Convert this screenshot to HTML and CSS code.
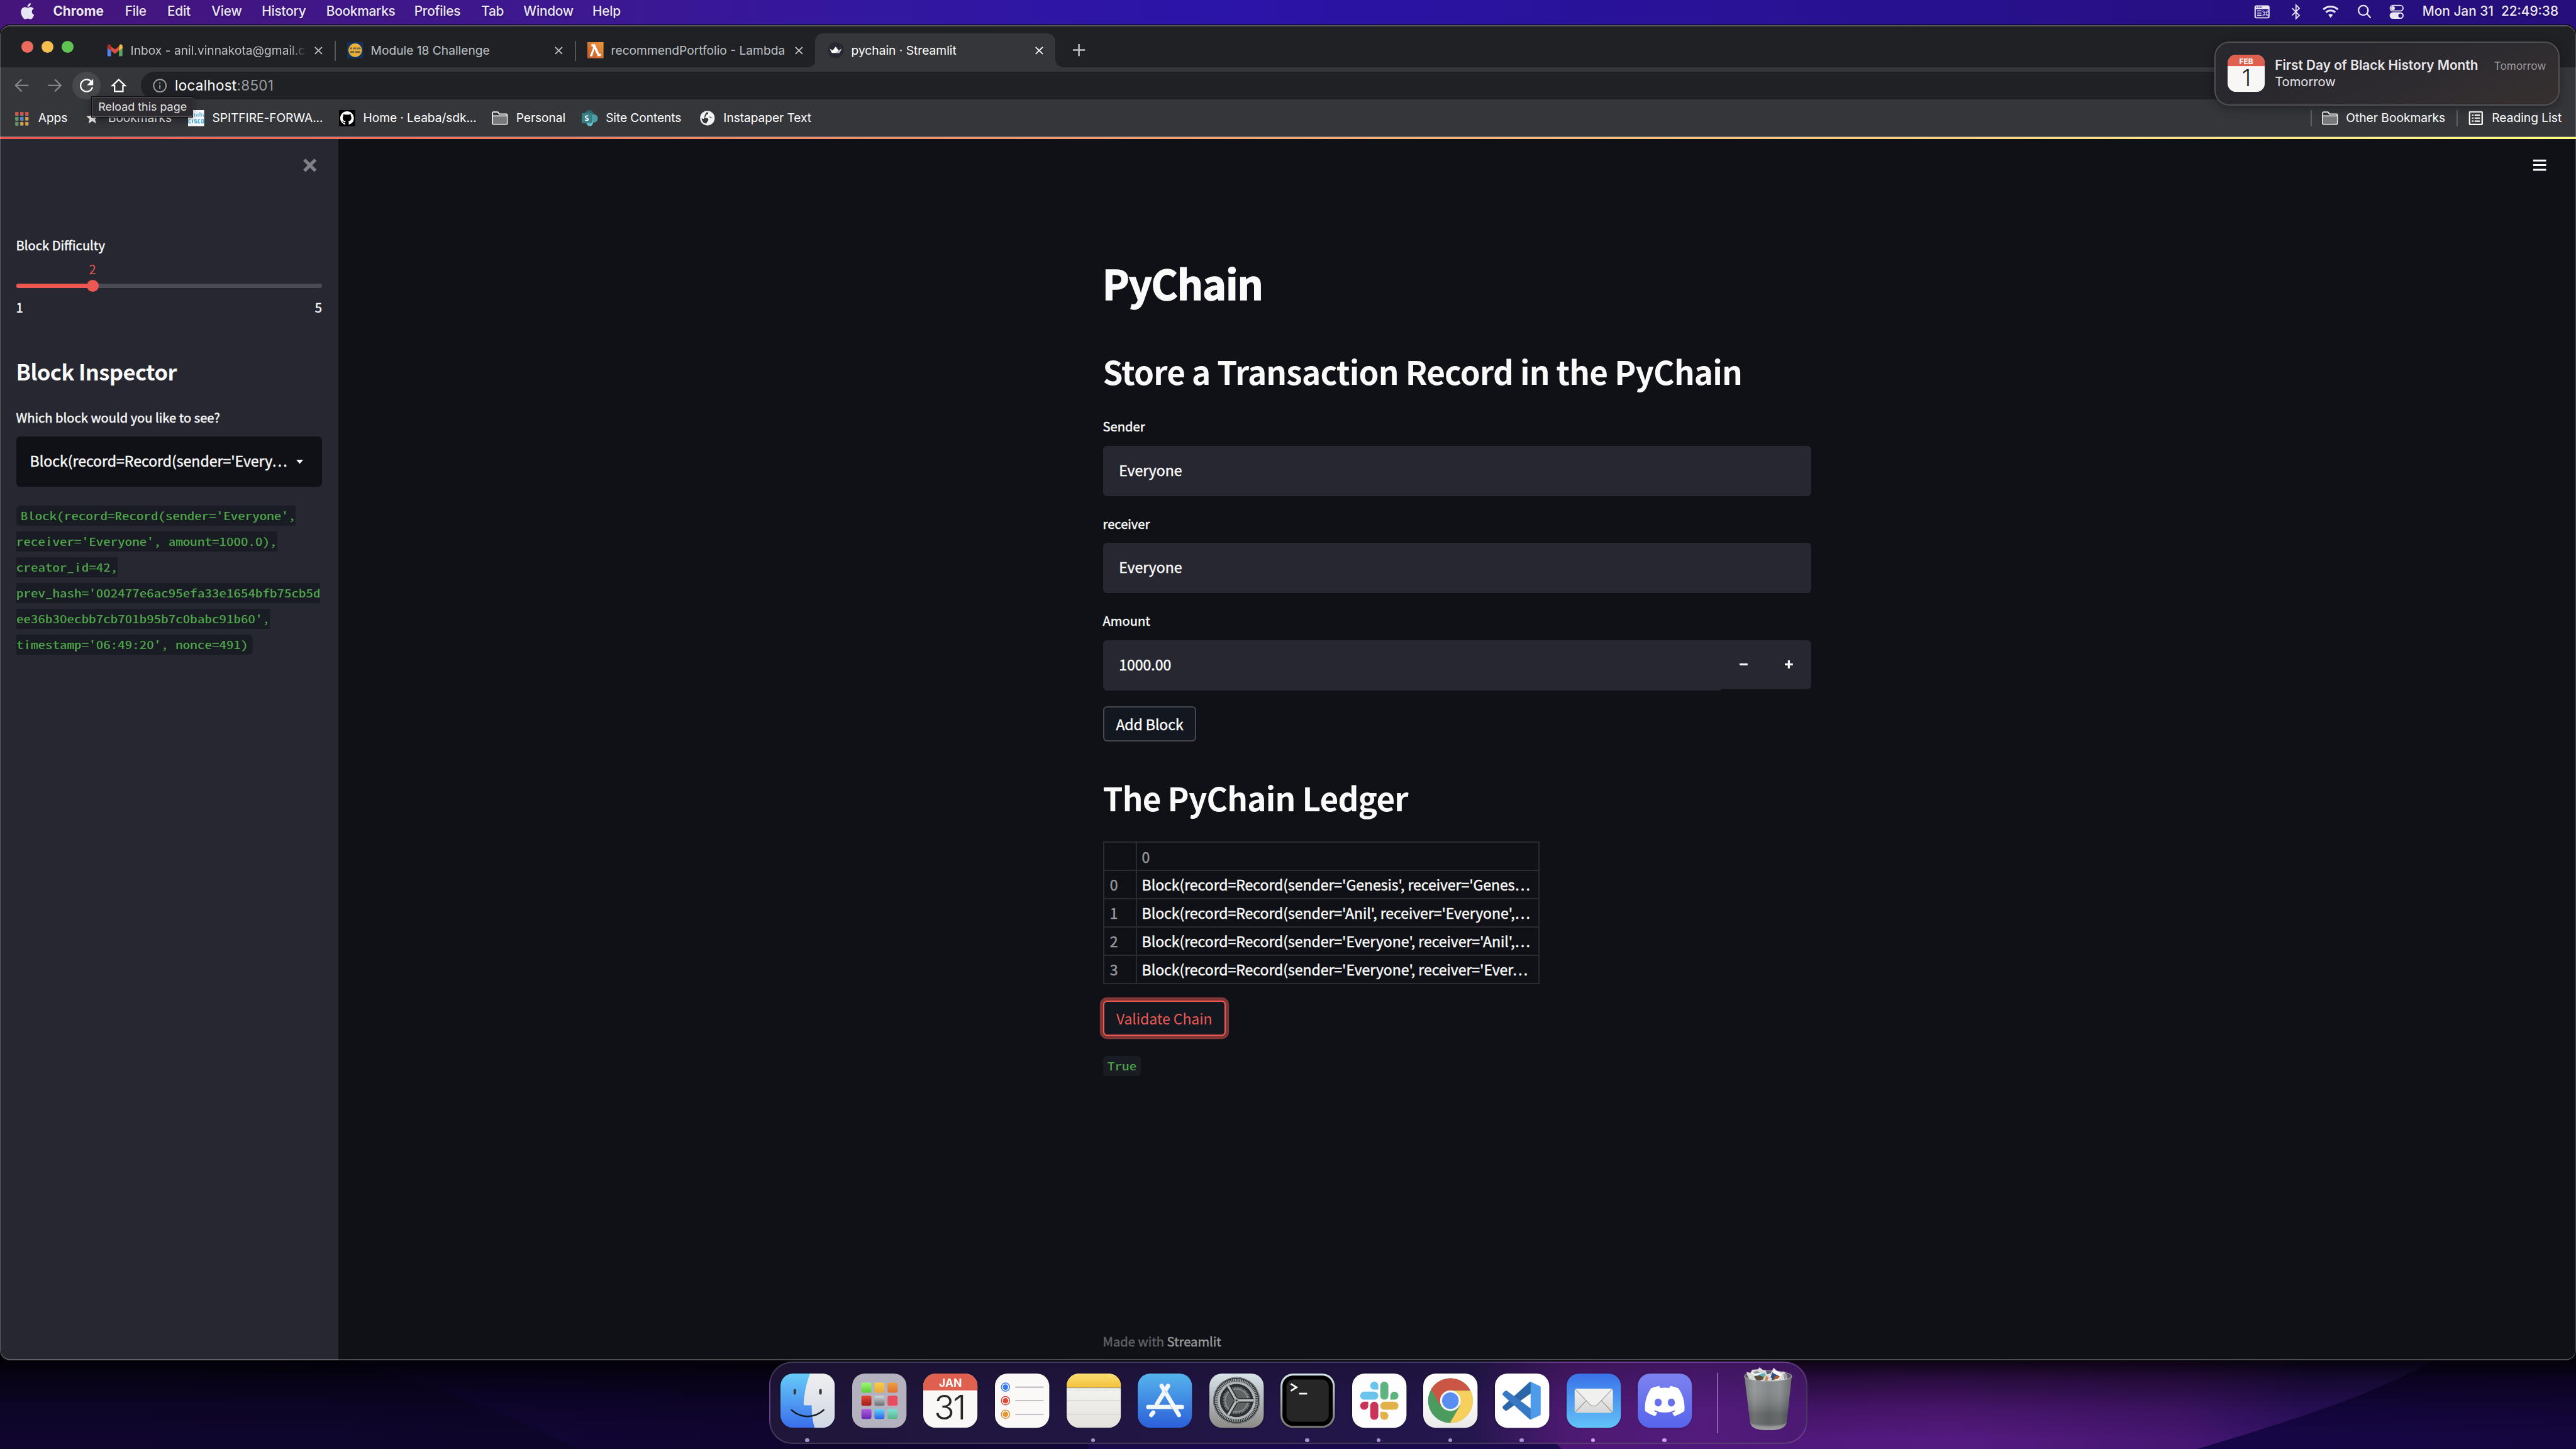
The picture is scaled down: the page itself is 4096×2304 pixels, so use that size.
FILE: index.html
```html
<!DOCTYPE html>
<html lang="en">
<head>
<meta charset="utf-8">
<title>pychain · Streamlit</title>
<link rel="stylesheet" href="styles.css">
</head>
<body>
<div class="desktop">
  <svg class="wallpaper" viewBox="0 0 5120 200" preserveAspectRatio="none">
    <defs>
      <linearGradient id="w1" x1="0" x2="1" y1="0" y2="0"><stop offset="0" stop-color="#10062f"/><stop offset=".6" stop-color="#0b0424"/><stop offset="1" stop-color="#0c0526"/></linearGradient>
      <linearGradient id="w2" x1="0" x2="1" y1="0" y2="0"><stop offset="0" stop-color="#12063a"/><stop offset=".4" stop-color="#10052f"/><stop offset="1" stop-color="#170847"/></linearGradient>
      <linearGradient id="w3" x1="0" x2="1" y1="0" y2="0"><stop offset="0" stop-color="#4a1474"/><stop offset=".48" stop-color="#551a80"/><stop offset=".72" stop-color="#461672"/><stop offset=".85" stop-color="#2c1163"/><stop offset="1" stop-color="#2a1466"/></linearGradient>
      <linearGradient id="w4" x1="0" x2="1" y1="0" y2="0"><stop offset="0" stop-color="#170648"/><stop offset="1" stop-color="#16063f"/></linearGradient>
      <linearGradient id="ws" x1="0" x2="0" y1="0" y2="1"><stop offset=".1" stop-color="#000" stop-opacity=".88"/><stop offset=".3" stop-color="#000" stop-opacity=".52"/><stop offset=".6" stop-color="#000" stop-opacity=".18"/><stop offset=".9" stop-color="#000" stop-opacity="0"/></linearGradient>
    </defs>
    <rect width="5120" height="200" fill="url(#w1)"/>
    <path d="M630 0C800 60 1000 120 1150 200H3200V0z" fill="url(#w2)"/>
    <path d="M2155 180H3200V200H2165z" fill="#1a0a4c"/>
    <path d="M2950 0L3086 182L3104 200H4368C4600 130 4750 80 4880 0z" fill="url(#w3)"/>
    <path d="M4368 200C4600 130 4750 80 4880 0H5120V200z" fill="url(#w4)"/>
    <rect width="5120" height="200" fill="url(#ws)"/>
  </svg>

  <header class="menubar">
    <nav class="menubar-menus">
      <svg class="apple" viewBox="0 0 24 24"><path d="M12.152 6.896c-.948 0-2.415-1.078-3.96-1.04-2.04.027-3.91 1.183-4.961 3.014-2.117 3.675-.546 9.103 1.519 12.09 1.013 1.454 2.208 3.09 3.792 3.039 1.52-.065 2.09-.987 3.935-.987 1.831 0 2.35.987 3.96.948 1.637-.026 2.676-1.48 3.676-2.948 1.156-1.688 1.636-3.325 1.662-3.415-.039-.013-3.182-1.221-3.22-4.857-.026-3.04 2.48-4.494 2.597-4.559-1.429-2.09-3.623-2.324-4.39-2.376-2-.156-3.675 1.09-4.61 1.09zM15.53 3.83c.843-1.012 1.4-2.427 1.245-3.83-1.207.052-2.662.805-3.532 1.818-.78.896-1.454 2.338-1.273 3.714 1.338.104 2.715-.688 3.559-1.701"/></svg>
      <b>Chrome</b><span>File</span><span>Edit</span><span>View</span><span>History</span><span>Bookmarks</span><span>Profiles</span><span>Tab</span><span>Window</span><span>Help</span>
    </nav>
    <div class="menubar-status">
      <svg viewBox="0 0 32 32"><path fill-rule="evenodd" d="M5 3h22a4 4 0 0 1 4 4v18a4 4 0 0 1-4 4H5a4 4 0 0 1-4-4V7a4 4 0 0 1 4-4zM3.500 10.500V25a1.800 1.800 0 0 0 1.800 1.800h21.400A1.800 1.800 0 0 0 28.500 25V10.500z"/><path d="M4.500 6.800h2.200M8.500 6.800h2.200M12.500 6.800h2.200" stroke="#280f85" stroke-width="2.200"/><path d="M6 14h9M6 18.500h9M6 23h9" stroke="#e9e6f4" stroke-width="2"/><path d="M20.300 16.800h4.400v4.400h-4.400zM20.300 16.800h-1.500a1.500 1.500 0 1 1 1.500-1.500zM24.700 16.800h1.500a1.500 1.500 0 1 0-1.500-1.500zM20.300 21.200h-1.500a1.500 1.500 0 1 0 1.500 1.500zM24.700 21.200h1.500a1.500 1.500 0 1 1-1.500 1.500z" fill="none" stroke="#e9e6f4" stroke-width="1.100"/></svg>
      <svg viewBox="0 0 32 32"><path d="M8.500 9l14 14L16 29.500V2.500L22.500 9l-14 14" fill="none" stroke="#e9e6f4" stroke-width="2.300"/></svg>
      <svg viewBox="0 0 32 32"><path d="M1.500 11.500a21 21 0 0 1 29 0M6.800 17a13.500 13.500 0 0 1 18.400 0" fill="none" stroke="#e9e6f4" stroke-width="3.900"/><path d="M11.500 22a6.500 6.500 0 0 1 9 0L16 28z"/></svg>
      <svg viewBox="0 0 32 32"><path d="M13.500 3.500a9.500 9.500 0 1 0 .01 0zM20.500 19.500L27.500 27.500" fill="none" stroke="#e9e6f4" stroke-width="2.800" stroke-linecap="round"/></svg>
      <svg viewBox="0 0 32 32"><rect x="3.200" y="3.200" width="25.600" height="11" rx="5.500" fill="none" stroke="#e9e6f4" stroke-width="2.300"/><circle cx="8.700" cy="8.700" r="3.800"/><path fill-rule="evenodd" d="M8.500 17h15a6.500 6.500 0 0 1 0 13h-15a6.500 6.500 0 0 1 0-13zm15 2.400a4.100 4.100 0 1 0 .01 0z"/></svg>
      <span class="date">Mon Jan 31</span><span class="clock">22:49:38</span>
    </div>
  </header>

  <section class="window">
    <div class="tabstrip">
      <div class="lights"><i class="close"></i><i class="min"></i><i class="max"></i></div>
      <div class="tab">
        <svg class="favicon" viewBox="0 0 32 32"><path d="M1 8v18a2 2 0 0 0 2 2h5V13z" fill="#4f86ec"/><path d="M31 8v18a2 2 0 0 1-2 2h-5V13z" fill="#58a55c"/><path d="M24 8.500V17l7-5V8c0-3.400-3.600-4.600-6-2.800z" fill="#f2bd42"/><path d="M8 17V8.500l8 6 8-6V17l-8 6z" fill="#d95140"/><path d="M1 8v4l7 5V8.500L7 5.200C4.600 3.400 1 4.600 1 8z" fill="#b92d23"/></svg>
        <span class="tab-title fade">Inbox - anil.vinnakota@gmail.c</span>
        <svg class="x" viewBox="0 0 16 16"><path d="M1 1l14 14M15 1L1 15"/></svg>
      </div>
      <div class="tab sep">
        <svg class="favicon" viewBox="0 0 32 32"><rect width="32" height="32" fill="#12315f"/><circle cx="16" cy="16" r="13.500" fill="#e9b03c"/><path d="M5 12.500h5M11.500 12.500h6M19 12.500h8M6 19.500h8M16 19.500h10" stroke="#7a6a3c" stroke-width="4"/></svg>
        <span class="tab-title">Module 18 Challenge</span>
        <svg class="x" viewBox="0 0 16 16"><path d="M1 1l14 14M15 1L1 15"/></svg>
      </div>
      <div class="tab sep">
        <svg class="favicon" viewBox="0 0 32 32"><defs><linearGradient id="lam" x1="0" y1="1" x2="1" y2="0"><stop stop-color="#c4582a"/><stop offset="1" stop-color="#ed9b3b"/></linearGradient></defs><rect width="32" height="32" fill="url(#lam)"/><path d="M8 4h7l8.500 19.500 2.500-1 1.500 4-6.500 2L14 13.500 9.500 28H5l6.500-17L10.500 8.500H8z" fill="#fff"/></svg>
        <span class="tab-title">recommendPortfolio - Lambda</span>
        <svg class="x" viewBox="0 0 16 16"><path d="M1 1l14 14M15 1L1 15"/></svg>
      </div>
      <div class="tab active">
        <svg class="favicon" viewBox="0 0 32 32"><circle cx="16" cy="16" r="16" fill="#262730"/><path d="M4 13l6 3.500L16 9l6 7.500L28 13l-4.500 8.500h-15z" fill="#fff"/><path d="M28 13l-4.500 8.500H16l6-5z" fill="#b9babd"/></svg>
        <span class="tab-title">pychain · Streamlit</span>
        <svg class="x" viewBox="0 0 16 16"><path d="M1 1l14 14M15 1L1 15"/></svg>
      </div>
      <svg class="newtab" viewBox="0 0 24 24"><path d="M12 0v24M0 12h24"/></svg>
    </div>

    <div class="toolbar">
      <svg class="nav dim" viewBox="0 0 32 32"><path d="M29 16H4M15.500 4L3.500 16l12 12"/></svg>
      <svg class="nav dim" viewBox="0 0 32 32"><path d="M3 16h25M16.500 4l12 12-12 12"/></svg>
      <span class="reload"><svg class="nav" viewBox="0 0 32 32"><path d="M26.500 10.500A12 12 0 1 0 27.500 19.500"/><path d="M29 3v12.500H16.500z" fill="#fff" stroke="none"/></svg></span>
      <svg class="nav home" viewBox="0 0 32 32"><path d="M16 4.500L3.500 16.500h4.200V28h16.600V16.500h4.200z"/></svg>
      <div class="omnibox">
        <svg class="info" viewBox="0 0 28 28"><circle cx="14" cy="14" r="12.400"/><path d="M14 12.500v8M14 7.500v2.700"/></svg>
        <span>localhost<em>:8501</em></span>
      </div>
    </div>

    <div class="bookmarks">
      <div class="bookmark-list">
        <div class="bm"><svg viewBox="0 0 32 32"><g fill="#999"><path d="M3 4h6v7H3zM13 4h6v7h-6zM23 4h6v7h-6zM3 14h6v7H3zM13 14h6v7h-6zM23 14h6v7h-6zM3 24h6v7H3zM13 24h6v7h-6zM23 24h6v7h-6z"/></g><g fill="#dd4b3e"><path d="M3 4h6v5.800H3zM13 4h6v5.800h-6zM23 4h6v5.800h-6z"/></g><path fill="#559a5c" d="M3 14h6v5.800H3zM3 24h6v5.800H3z"/><path fill="#4a86e8" d="M13 14h6v5.800h-6z"/><path fill="#e2a437" d="M23 14h6v5.800h-6zM13 24h6v5.800h-6zM23 24h6v5.800h-6z"/></svg>Apps</div>
        <div class="bm"><svg viewBox="0 0 32 32"><path d="M16 3.500l3.300 8.200 8.700.6-6.700 5.700 2.200 8.600L16 21.800l-7.500 4.800 2.200-8.600L4 12.300l8.700-.6z" fill="#eceded"/></svg>Bookmarks</div>
        <div class="bm"><svg viewBox="0 0 32 32"><rect width="32" height="32" fill="#fcfdfe"/><path d="M1.500 9v4M5.200 6v7M9 4v9M12.700 7v6M16.400 8v5M20 7v6M23.700 4v9M27.400 6v7M30.800 9v4" stroke="#4fb2dd" stroke-width="1.600"/><path d="M5 19H2.500a1 1 0 0 0-1 1v4.500a1 1 0 0 0 1 1H5M9 18.500v7.500M17 19h-3.500v3H17v3.500h-4M24 19h-3.500v6.500H24M27 19h4v6.500h-4z" fill="none" stroke="#4fb2dd" stroke-width="2"/></svg>SPITFIRE-FORWA...</div>
        <div class="bm"><svg viewBox="0 0 32 32"><rect width="32" height="32" fill="#000"/><path transform="translate(2.400 2.400) scale(1.700)" fill="#fff" d="M8 0C3.580 0 0 3.580 0 8c0 3.540 2.290 6.530 5.470 7.590.4.070.550-.170.550-.380 0-.190-.010-.820-.010-1.490-2.010.370-2.530-.490-2.690-.940-.090-.230-.480-.940-.820-1.130-.280-.150-.680-.520-.010-.530.630-.010 1.080.580 1.230.820.720 1.210 1.870.870 2.330.660.070-.520.280-.870.510-1.070-1.780-.2-3.640-.890-3.640-3.950 0-.870.310-1.590.820-2.150-.080-.2-.360-1.020.080-2.120 0 0 .670-.210 2.200.820.640-.180 1.320-.270 2-.270.680 0 1.360.090 2 .270 1.530-1.040 2.200-.820 2.200-.820.440 1.100.160 1.920.080 2.120.510.560.820 1.270.820 2.150 0 3.070-1.870 3.750-3.650 3.950.290.250.540.730.540 1.480 0 1.070-.010 1.930-.010 2.200 0 .210.150.460.550.380A8.013 8.013 0 0 0 16 8c0-4.420-3.580-8-8-8z"/></svg>Home · Leaba/sdk...</div>
        <div class="bm"><svg viewBox="0 0 32 32"><path d="M1.500 27V5.500a1.500 1.500 0 0 1 1.500-1.500h9l3 4h14a1.500 1.500 0 0 1 1.500 1.500V27a1 1 0 0 1-1 1h-27a1 1 0 0 1-1-1z" fill="#35363a" stroke="#fff" stroke-width="2.200"/><path d="M2.500 12h27v15h-27z" fill="#777879"/><path d="M2 11.500h28" stroke="#fff" stroke-width="2"/></svg>Personal</div>
        <div class="bm"><svg viewBox="0 0 32 32"><circle cx="15" cy="9.500" r="9.500" fill="#2c676c"/><circle cx="23.500" cy="16.500" r="8.500" fill="#4a9ba3"/><circle cx="16" cy="25.500" r="6.500" fill="#63bccb"/><rect y="6" width="20" height="20" rx="1.500" fill="#387f86"/><path d="M13 12.300c-1-1-6-1.300-6 1.400s6 1.900 6 4.700-5 2.600-6.300 1.200" fill="none" stroke="#fff" stroke-width="2.200"/></svg>Site Contents</div>
        <div class="bm"><svg viewBox="0 0 32 32"><circle cx="16" cy="16" r="14.500" fill="#f1f3f4"/><path d="M15 4.500c5-.8 2.500 4-.5 4.800-2.500.7 0 3.200-2.500 3.700s-1 3 2.500 3 4.500 3 2.500 5.500-3 5.500-3.500 5.500C9 27 4.500 22 4.500 16c4 3 5.500 1 5.500-1.500S12.500 5 15 4.500zM19 12.500c2 3 3.500 3.500 8 3" fill="#35363a"/></svg>Instapaper Text</div>
      </div>
      <div class="bookmark-extra">
        <div class="bm"><svg viewBox="0 0 32 32"><path d="M1.500 27V5.500a1.500 1.500 0 0 1 1.500-1.500h9l3 4h14a1.500 1.500 0 0 1 1.500 1.500V27a1 1 0 0 1-1 1h-27a1 1 0 0 1-1-1z" fill="#35363a" stroke="#fff" stroke-width="2.200"/><path d="M2.500 12h27v15h-27z" fill="#777879"/><path d="M2 11.500h28" stroke="#fff" stroke-width="2"/></svg>Other Bookmarks</div>
        <div class="bm"><svg viewBox="0 0 32 32"><rect x="3.500" y="3.500" width="25" height="25" rx="1" fill="none" stroke="#fff" stroke-width="2.800"/><path d="M8 10h3.500M13.500 10H24M8 16h3.500M13.500 16H24M8 22h3.500M13.500 22H24" stroke="#fff" stroke-width="2.600"/></svg>Reading List</div>
      </div>
    </div>

    <div class="app">
      <aside class="sidebar">
        <svg class="sidebar-close" viewBox="0 0 27 27"><path d="M2.500 2.500l22 22M24.500 2.500l-22 22"/></svg>
        <p class="label first">Block Difficulty</p>
        <div class="slider">
          <div class="slider-value">2</div>
          <div class="track"><div class="fill" style="width:25%"></div></div>
          <div class="range"><span>1</span><span>5</span></div>
        </div>
        <h3>Block Inspector</h3>
        <p class="label">Which block would you like to see?</p>
        <div class="select"><span>Block(record=Record(sender='Every…</span><svg viewBox="0 0 14 8"><path d="M0 0h14L7 8z"/></svg></div>
        <code class="block">
          <span>Block(record=Record(sender='Everyone',</span>
          <span>receiver='Everyone', amount=1000.0),</span>
          <span>creator_id=42,</span>
          <span>prev_hash='002477e6ac95efa33e1654bfb75cb5d</span>
          <span>ee36b30ecbb7cb701b95b7c0babc91b60',</span>
          <span>timestamp='06:49:20', nonce=491)</span>
        </code>
      </aside>

      <main class="main">
        <svg class="hamburger" viewBox="0 0 28 26"><path d="M0 3h28M0 13h28M0 23h28"/></svg>
        <div class="column">
          <h1>PyChain</h1>
          <h2 class="store">Store a Transaction Record in the PyChain</h2>
          <label class="label">Sender</label>
          <div class="field">Everyone</div>
          <label class="label">receiver</label>
          <div class="field">Everyone</div>
          <label class="label">Amount</label>
          <div class="number">
            <div class="field">1000.00</div>
            <div class="steps">
              <svg viewBox="0 0 16 16"><path d="M0 8h16"/></svg>
              <svg viewBox="0 0 16 16"><path d="M0 8h16M8 0v16"/></svg>
            </div>
          </div>
          <button class="button add">Add Block</button>
          <h2 class="ledger">The PyChain Ledger</h2>
          <div class="table">
            <div class="row head"><span></span><span>0</span></div>
            <div class="row"><span>0</span><span>Block(record=Record(sender='Genesis', receiver='Genes…</span></div>
            <div class="row"><span>1</span><span>Block(record=Record(sender='Anil', receiver='Everyone',…</span></div>
            <div class="row"><span>2</span><span>Block(record=Record(sender='Everyone', receiver='Anil',…</span></div>
            <div class="row"><span>3</span><span>Block(record=Record(sender='Everyone', receiver='Ever…</span></div>
          </div>
          <button class="button focus">Validate Chain</button>
          <code class="result">True</code>
          <footer>Made with <b>Streamlit</b></footer>
        </div>
      </main>
    </div>
    <div class="tooltip">Reload this page</div>
  </section>

  <div class="notification">
    <svg class="note-icon" viewBox="0 0 108 108"><defs><clipPath id="rr"><rect width="108" height="108" rx="25"/></clipPath></defs><g clip-path="url(#rr)"><rect width="108" height="108" fill="#f8f7f5"/><rect width="108" height="33" fill="#e0604f"/></g><text x="54" y="27" class="cal-month">FEB</text><text x="53" y="92" class="cal-day">1</text></svg>
    <div class="note-body">
      <div class="note-head"><strong>First Day of Black History Month</strong><time>Tomorrow</time></div>
      <div>Tomorrow</div>
    </div>
  </div>

  <div class="dock">
    <div class="dock-item running"><svg viewBox="0 0 108 108"><defs><linearGradient id="fb" x2="0" y2="1"><stop stop-color="#66cbf8"/><stop offset="1" stop-color="#3a6eec"/></linearGradient><linearGradient id="fw" x2="0" y2="1"><stop stop-color="#efeff0"/><stop offset="1" stop-color="#d0d8e4"/></linearGradient></defs><g clip-path="url(#rr)"><rect width="108" height="108" fill="url(#fb)"/><path d="M59 0C52 18 47 38 46 61q0 2 2 2h14q0 26 6 45h40V0z" fill="url(#fw)"/></g><path d="M28.500 33v6.500M79.500 33v6.500" stroke="#33383f" stroke-width="5" stroke-linecap="round"/><path d="M22 72.500c18 17 46 17 64 0" fill="none" stroke="#101820" stroke-width="3" stroke-linecap="round"/></svg></div>
    <div class="dock-item"><svg viewBox="0 0 108 108"><defs><linearGradient id="l1" x2="0" y2="1"><stop stop-color="#9dfb74"/><stop offset="1" stop-color="#5fc93c"/></linearGradient><linearGradient id="l2" x2="0" y2="1"><stop stop-color="#f8d048"/><stop offset="1" stop-color="#eda73b"/></linearGradient><linearGradient id="l3" x2="0" y2="1"><stop stop-color="#eea03a"/><stop offset="1" stop-color="#df7034"/></linearGradient><linearGradient id="l4" x2="0" y2="1"><stop stop-color="#e44a3a"/><stop offset="1" stop-color="#a01e15"/></linearGradient><linearGradient id="l5" x2="0" y2="1"><stop stop-color="#ced8dd"/><stop offset="1" stop-color="#6a6c6c"/></linearGradient><linearGradient id="l6" x2="0" y2="1"><stop stop-color="#b05fe6"/><stop offset="1" stop-color="#6b2ab0"/></linearGradient><linearGradient id="l7" x2="0" y2="1"><stop stop-color="#63d8fb"/><stop offset="1" stop-color="#2a60e8"/></linearGradient><linearGradient id="l8" x2="0" y2="1"><stop stop-color="#83e2d8"/><stop offset="1" stop-color="#54b787"/></linearGradient></defs><rect width="108" height="108" rx="25" fill="#b5b2bf"/><g><rect x="18.300" y="18" width="20" height="20" rx="4" fill="url(#l1)"/><rect x="44.200" y="18" width="20" height="20" rx="4" fill="url(#l2)"/><rect x="70.300" y="18" width="20" height="20" rx="4" fill="url(#l3)"/><rect x="18.300" y="44" width="20" height="20" rx="4" fill="url(#l4)"/><rect x="44.200" y="44" width="20" height="20" rx="4" fill="url(#l5)"/><rect x="70.300" y="44" width="20" height="20" rx="4" fill="#e64e60"/><rect x="18.300" y="70.200" width="20" height="20" rx="4" fill="url(#l6)"/><rect x="44.200" y="70.200" width="20" height="20" rx="4" fill="url(#l7)"/><rect x="70.300" y="70.200" width="20" height="20" rx="4" fill="url(#l8)"/></g></svg></div>
    <div class="dock-item"><svg viewBox="0 0 108 108"><g clip-path="url(#rr)"><rect width="108" height="108" fill="#f9f8f6"/><rect width="108" height="33.500" fill="#e0604f"/></g><text x="54" y="26.500" class="cal-month">JAN</text><text x="52" y="91" class="cal-day">31</text></svg></div>
    <div class="dock-item"><svg viewBox="0 0 108 108"><rect width="108" height="108" rx="25" fill="#faf9f8"/><g fill="none" stroke-width="1.800"><circle cx="21" cy="27" r="8.300" stroke="#3b7bea"/><circle cx="21" cy="54" r="8.300" stroke="#d84a3a"/><circle cx="21" cy="81" r="8.300" stroke="#dd9338"/></g><circle cx="21" cy="27" r="5.400" fill="#3478f6"/><circle cx="21" cy="54" r="5.400" fill="#e04936"/><circle cx="21" cy="81" r="5.400" fill="#e6952f"/><path d="M40.500 27h56M40.500 54h56M40.500 81h56" stroke="#abaaae" stroke-width="2"/></svg></div>
    <div class="dock-item running"><svg viewBox="0 0 108 108"><defs><linearGradient id="n1" x2="0" y2="1"><stop stop-color="#f9df72"/><stop offset="1" stop-color="#f4c23b"/></linearGradient><linearGradient id="n2" x2="0" y2="1"><stop stop-color="#f9f9f8"/><stop offset="1" stop-color="#e3e2dc"/></linearGradient></defs><g clip-path="url(#rr)"><rect width="108" height="108" fill="url(#n2)"/><rect width="108" height="27.500" fill="url(#n1)"/><path d="M0 28.300h108" stroke="#a59b80" stroke-width="1.800"/><path d="M2 33h106" stroke="#c8c7c3" stroke-width="1.800" stroke-dasharray="1.800 2"/><path d="M0 54h108M0 81h108" stroke="#d3d2d2" stroke-width="1.500"/></g></svg></div>
    <div class="dock-item"><svg viewBox="0 0 108 108"><defs><linearGradient id="as" x2="0" y2="1"><stop stop-color="#55b4ec"/><stop offset="1" stop-color="#2b5fd9"/></linearGradient></defs><rect width="108" height="108" rx="25" fill="url(#as)"/><g stroke="#f2f7fc" stroke-width="8.500" stroke-linecap="round"><path d="M21 66.500h67"/><path d="M47.500 24.500L82 82.500" /><path d="M60.500 24.500L38 61"/><path d="M31 77.500l-4 5"/></g><path d="M64 62l5.500 9M54 33l4.500 7.500" stroke="#8fb4ea" stroke-width="1.200"/></svg></div>
    <div class="dock-item"><svg viewBox="0 0 108 108"><defs><linearGradient id="sp" x2="0" y2="1"><stop stop-color="#d8e4ea"/><stop offset="1" stop-color="#8c8a86"/></linearGradient></defs><rect width="108" height="108" rx="25" fill="url(#sp)"/><circle cx="54" cy="53.500" r="46.500" fill="#2b2f31"/><circle cx="54" cy="53.500" r="45.500" fill="none" stroke="#b4b9bb" stroke-width="1"/><circle cx="54" cy="53.500" r="40.500" fill="none" stroke="#a3a8aa" stroke-width="5" stroke-dasharray="2 1.530"/><circle cx="54" cy="53.500" r="35.500" fill="none" stroke="#aeb3b5" stroke-width="5"/><circle cx="54" cy="53.500" r="25.500" fill="#585b5c" stroke="#83878a" stroke-width="4" stroke-dasharray="1.500 1.500"/><circle cx="54" cy="53.500" r="22.500" fill="#5f6263" stroke="#8d9294" stroke-width="2"/><path d="M54 53.500h34M54 53.500L37 24M54 53.500L37 83" stroke="#2b2f31" stroke-width="9"/><path d="M54 53.500h34M54 53.500L37 24M54 53.500L37 83" stroke="#b9bec0" stroke-width="4.500"/><circle cx="54" cy="53.500" r="4.500" fill="#aab0b2"/><circle cx="54" cy="53.500" r="2" fill="#2b2f31"/></svg></div>
    <div class="dock-item running"><svg viewBox="0 0 108 108"><defs><linearGradient id="tm" x2="0" y2="1"><stop stop-color="#d3e4ec"/><stop offset="1" stop-color="#777573"/></linearGradient></defs><rect width="108" height="108" rx="25" fill="url(#tm)"/><rect x="4" y="4" width="100" height="100" rx="21" fill="#000"/><rect x="12" y="12" width="84" height="84" rx="14" fill="#262626"/><path d="M20.500 20.500L32 27.500l-11.500 7" fill="none" stroke="#fff" stroke-width="3.400"/><path d="M37 40h16" stroke="#fff" stroke-width="3.400"/></svg></div>
    <div class="dock-item running"><svg viewBox="0 0 108 108"><rect width="108" height="108" rx="25" fill="#fdfdfd"/><g fill="#6ac4ec"><path d="M52 32h-8a8 8 0 1 1 8-8z"/><rect x="16" y="36" width="36" height="16" rx="8"/></g><g fill="#5fb37f"><rect x="56" y="16" width="16" height="36" rx="8"/><path d="M76 52v-8a8 8 0 1 1 8 8z"/></g><g fill="#cb3459"><path d="M32 56v8a8 8 0 1 1-8-8z"/><rect x="36" y="56" width="16" height="36" rx="8"/></g><g fill="#e2b14a"><rect x="56" y="56" width="36" height="16" rx="8"/><path d="M56 76h8a8 8 0 1 1-8 8z"/></g></svg></div>
    <div class="dock-item running"><svg viewBox="0 0 108 108"><defs><linearGradient id="cb" x2="0" y2="1"><stop offset=".4" stop-color="#fff"/><stop offset="1" stop-color="#e9e9e9"/></linearGradient></defs><rect width="108" height="108" rx="25" fill="url(#cb)"/><circle cx="54" cy="54" r="44.500" fill="#4b9b5f"/><path d="M54 54L15.500 31.700A44.500 44.500 0 0 1 94 34H54z" fill="#cb5645"/><path d="M15.500 31.700L34.700 65 54 54V34z" fill="#cb5645"/><path d="M54 34h40A44.500 44.500 0 0 1 53 98.500L73 64z" fill="#f6cf5c"/><circle cx="54" cy="54" r="20.500" fill="#f4f6f8"/><circle cx="54" cy="54" r="16.500" fill="#5a8df0"/></svg></div>
    <div class="dock-item running"><svg viewBox="0 0 108 108"><rect width="108" height="108" rx="25" fill="#fff"/><path d="M69 17l3-1v23L24 73.500q-2 1.300-4-.3l-4-3.800q-2-2.200 0-4.400z" fill="#2b67a8"/><path d="M16 43q-2-2.200 0-4.400l4-3.800q2-1.600 4-.3L72 70v22l-3-1z" fill="#3879c6"/><path d="M71 16.300l18.500 8.700q1.500.8 1.500 2.500v53q0 1.700-1.500 2.500L71 91.700z" fill="#4e9be9"/></svg></div>
    <div class="dock-item running"><svg viewBox="0 0 108 108"><defs><linearGradient id="ml" x2="0" y2="1"><stop stop-color="#3a72e8"/><stop offset="1" stop-color="#62c3f8"/></linearGradient><linearGradient id="me" x2="0" y2="1"><stop stop-color="#f2f2f1"/><stop offset="1" stop-color="#d6d6d6"/></linearGradient></defs><rect width="108" height="108" rx="25" fill="url(#ml)"/><rect x="16" y="30" width="76" height="48" rx="4" fill="url(#me)"/><path d="M17 77l22-23M91 77L69 54" stroke="#8f8f8f" stroke-width="1.300"/><path d="M17 31l30 31q7 5 14 0l30-31" fill="#f0f0ef" stroke="#9a9a9a" stroke-width="1.300"/></svg></div>
    <div class="dock-item running"><svg viewBox="0 0 108 108"><defs><linearGradient id="dc" x2="0" y2="1"><stop stop-color="#7c82ef"/><stop offset="1" stop-color="#5764eb"/></linearGradient></defs><rect width="108" height="108" rx="25" fill="url(#dc)"/><path transform="translate(14.500 15.200) scale(3.280)" fill="#fff" d="M20.317 4.370a19.791 19.791 0 0 0-4.885-1.515.074.074 0 0 0-.079.037c-.211.375-.445.865-.608 1.250-1.845-.276-3.680-.276-5.487 0-.164-.393-.406-.874-.618-1.250a.077.077 0 0 0-.079-.037 19.736 19.736 0 0 0-4.885 1.515.070.070 0 0 0-.032.028C.533 9.046-.319 13.580.099 18.058a.082.082 0 0 0 .031.056c2.053 1.508 4.041 2.423 5.993 3.029a.078.078 0 0 0 .084-.028c.462-.630.873-1.295 1.226-1.994a.076.076 0 0 0-.042-.106c-.653-.248-1.274-.550-1.872-.892a.077.077 0 0 1-.008-.128c.126-.094.252-.192.372-.291a.074.074 0 0 1 .078-.010c3.928 1.793 8.180 1.793 12.061 0a.074.074 0 0 1 .079.009c.120.099.246.198.373.292a.077.077 0 0 1-.007.128 12.299 12.299 0 0 1-1.873.891.077.077 0 0 0-.041.107c.360.698.772 1.363 1.225 1.993a.076.076 0 0 0 .084.029c1.961-.607 3.950-1.522 6.002-3.029a.077.077 0 0 0 .031-.055c.500-5.177-.838-9.674-3.549-13.660a.061.061 0 0 0-.031-.029zM8.020 15.331c-1.183 0-2.157-1.086-2.157-2.419 0-1.333.956-2.419 2.157-2.419 1.211 0 2.176 1.095 2.157 2.419 0 1.333-.956 2.419-2.157 2.419zm7.975 0c-1.183 0-2.157-1.086-2.157-2.419 0-1.333.955-2.419 2.157-2.419 1.211 0 2.176 1.095 2.157 2.419 0 1.333-.946 2.419-2.157 2.419z"/></svg></div>
    <div class="dock-sep"></div>
    <svg class="trash" viewBox="0 0 96 126"><defs><linearGradient id="tr"><stop stop-color="#6c7072"/><stop offset=".2" stop-color="#8f9294"/><stop offset=".5" stop-color="#7b7f81"/><stop offset=".75" stop-color="#85898b"/><stop offset="1" stop-color="#5d6163"/></linearGradient><linearGradient id="trs" x2="0" y2="1"><stop offset=".2" stop-color="#fff" stop-opacity=".08"/><stop offset=".7" stop-color="#000" stop-opacity=".22"/><stop offset=".88" stop-color="#000" stop-opacity=".22"/><stop offset="1" stop-color="#fff" stop-opacity=".25"/></linearGradient></defs><ellipse cx="48" cy="18" rx="47" ry="11" fill="#5d5668" stroke="#8c8a94" stroke-width="1.500"/><path d="M7 17L5 9l8 3 3-7 12-1 3-4 6 5 6 1 3 8 7-2 6-11 6 6 9 3 6-2 5 12 3 6-8 4H14z" fill="#d9d9da"/><path d="M13 12l10-5 14 6-8 5zM52 22l8-18 16 10-8 12z" fill="#f6f6f6"/><path d="M20 18l14-3 8-3-4 12-12 4zM63 14l8 4-9 6-8 2z" fill="#56503f"/><path d="M56 10l8 5-6 8-5-2z" fill="#2d4e88"/><path d="M64 17l7 2-5 5-7-2z" fill="#bb5c28"/><path d="M29 15l9-3 6 3-8 3z" fill="#53b5e0"/><path d="M34 17l9-2-3 5z" fill="#7cb555"/><path d="M78 14l6-2 3 8-6 5zM18 10l8-3 6 4-10 2z" fill="#9a9a9c"/><path d="M44 17l5 3-3 8h-5z" fill="#c5895a"/><path d="M1 18c4 13 90 13 94 0L85 108c-1 9-9 17-37 17s-35-8-36-17z" fill="url(#tr)"/><path d="M1 18c4 13 90 13 94 0L85 108c-1 9-9 17-37 17s-35-8-36-17z" fill="url(#trs)"/><path d="M12 108c2 12 70 12 73 0-2 11-8 17-37 17s-34-6-36-17z" fill="#a5a8aa" opacity=".5"/><path d="M1 18c4 13 90 13 94 0" fill="none" stroke="#a9abad" stroke-width="1.500"/></svg>
  </div>
</div>
</body>
</html>
```
FILE: styles.css
```css
html { font-size: 80px; }
* { box-sizing: border-box; }
body { margin: 0; font-family: Inter, "Noto Sans", sans-serif; }
h1, h2, h3, p { margin: 0; }
svg { display: block; flex: none; overflow: visible; }

.desktop {
  position: relative;
  width: 51.2rem;
  height: 28.8rem;
  overflow: hidden;
  display: flex;
  flex-direction: column;
  background: linear-gradient(90deg, #45157a 0, #3c1892 12rem, #33179f 17rem, #2b14a8 24rem, #28118f 38rem, #260f80 46rem, #270e7c 51.2rem);
}
.wallpaper { position: absolute; left: 0; bottom: 0; width: 51.2rem; height: 2rem; }

/* menu bar */
.menubar {
  height: .5rem;
  flex: none;
  display: flex;
  justify-content: space-between;
  font-size: .26rem;
  line-height: .46rem;
  font-weight: 500;
  letter-spacing: -.003rem;
  color: #ece8f5;
  text-shadow: 0 .02rem .04rem rgba(0, 0, 0, .3);
  white-space: nowrap;
}
.menubar svg { fill: #e9e6f4; }
.menubar-menus {
  display: grid;
  padding-left: .385rem;
  grid-template-columns: .67rem 1.43rem .84rem .88rem 1rem 1.28rem 1.75rem 1.33rem .84rem 1.37rem 1rem;
}
.menubar-menus b { font-weight: 700; letter-spacing: 0; }
.apple { width: .32rem; height: .32rem; margin-top: .06rem; }
.menubar-status { display: flex; padding-right: .35rem; letter-spacing: 0; }
.menubar-status svg { width: .32rem; height: .32rem; margin-top: .08rem; margin-right: .36rem; }
.menubar-status svg:nth-child(4) { margin-right: .32rem; }
.menubar-status .date { margin-right: .15rem; margin-left: -.01rem; }

/* browser window */
.window {
  position: relative;
  height: 26.54rem;
  flex: none;
  display: flex;
  flex-direction: column;
  border-radius: .2rem;
  background: #202124;
  overflow: hidden;
  box-shadow: 0 0 0 1px #000;
}
.window::after {
  content: "";
  position: absolute;
  inset: 0;
  border: 2px solid rgba(255, 255, 255, .25);
  border-left-width: 1px;
  border-right-width: 1px;
  border-radius: .2rem;
}
.tabstrip { height: .84rem; flex: none; display: flex; padding-top: .16rem; }
.lights { width: 1.88rem; display: flex; gap: .16rem; padding: .15rem 0 0 .42rem; }
.lights i { width: .24rem; height: .24rem; border-radius: 50%; }
.close { background: #ec6a5e; }
.min { background: #f4bf4f; }
.max { background: #61c554; }
.tab {
  position: relative;
  width: 4.775rem;
  height: .68rem;
  display: flex;
  align-items: center;
  padding: 0 .24rem;
  color: #bdc1c6;
  font-size: .24rem;
}
.tab.sep::before { content: ""; position: absolute; left: 0; top: .15rem; width: 2px; height: .4rem; background: #54565a; }
.favicon { width: .32rem; height: .32rem; margin-right: .155rem; }
.tab-title { flex: 1; white-space: nowrap; line-height: .4rem; margin-right: .08rem; }
.tab-title.fade { -webkit-mask-image: linear-gradient(90deg, #000 88%, transparent 98%); mask-image: linear-gradient(90deg, #000 88%, transparent 98%); }
.x { width: .16rem; height: .16rem; stroke: #c4c7cb; stroke-width: 2.2; }
.tab.active { background: #35363a; border-radius: .16rem .16rem 0 0; color: #fff; }
.tab.active .x { stroke: #fff; }
.tab.active::before, .tab.active::after { content: ""; position: absolute; bottom: 0; width: .16rem; height: .16rem; }
.tab.active::before { left: -.16rem; background: radial-gradient(circle at 0 0, transparent .16rem, #35363a .163rem); }
.tab.active::after { right: -.16rem; background: radial-gradient(circle at 100% 0, transparent .16rem, #35363a .163rem); }
.newtab { width: .24rem; height: .24rem; margin: .22rem 0 0 .345rem; stroke: #bdc1c6; stroke-width: 3.2; }

.toolbar { height: .72rem; flex: none; display: flex; align-items: center; padding: 0 .6rem 0 .27rem; background: #35363a; }
.nav { width: .32rem; height: .32rem; fill: none; stroke: #fff; stroke-width: 2.9; }
.nav.dim { stroke: #85878a; margin-right: .33rem; }
.reload { width: .56rem; height: .56rem; border-radius: 50%; background: #47484c; display: flex; align-items: center; justify-content: center; margin-left: -.13rem; margin-right: .195rem; }
.home { margin-right: .29rem; }
.omnibox { flex: 1; height: .56rem; border-radius: .28rem; background: #202124; display: flex; align-items: center; padding-left: .23rem; font-size: .28rem; letter-spacing: .004rem; line-height: .5rem; color: #fff; }
.omnibox em { font-style: normal; color: #9a9da1; }
.info { width: .28rem; height: .28rem; margin-right: .16rem; fill: none; stroke: #9a9da1; stroke-width: 2.4; }

.bookmarks { height: .66rem; flex: none; display: flex; justify-content: space-between; align-items: flex-start; padding: .13rem .285rem 0 .28rem; background: #35363a; border-bottom: 2px solid #5b5d61; color: #fff; font-size: .24rem; }
.bookmark-list { display: grid; grid-template-columns: 1.39rem 2.07rem 3rem 3.04rem 1.78rem 2.34rem 3rem; letter-spacing: -.001rem; }
.bm { display: flex; align-items: center; white-space: nowrap; line-height: .32rem; }
.bm svg { width: .32rem; height: .32rem; margin-right: .16rem; }
.bookmark-extra { display: flex; }
.bookmark-extra .bm { border-left: 2px solid #606266; padding-left: .2rem; margin-left: .22rem; }

/* streamlit page */
.app {
  position: relative;
  flex: 1;
  display: flex;
  font-family: "Noto Sans CJK JP", "Noto Sans CJK SC", sans-serif;
  color: #fafafa;
  background: #0f1116;
  -webkit-text-stroke: .45px;
}
.app::before { content: ""; position: absolute; left: 0; right: 0; top: 0; height: .04rem; background: linear-gradient(90deg, #ec5953, #f4976c 40%, #ffd27f 75%, #fffd80); }
.sidebar { width: 6.72rem; flex: none; padding: .43rem .32rem 0; background: #262730; display: flex; flex-direction: column; }
.sidebar-close { width: .27rem; height: .27rem; align-self: flex-end; margin-right: .11rem; stroke: #808086; stroke-width: 6.5; }
.label { display: block; font-size: .252rem; line-height: .4rem; }
.sidebar .first { margin-top: 1.26rem; }
.slider { font-size: .252rem; line-height: .34rem; }
.slider-value { width: 50%; margin-top: .09rem; text-align: center; color: #ec5953; -webkit-text-stroke: 0; }
.track { margin-top: .13rem; height: .08rem; border-radius: .04rem; background: #4a4b54; }
.fill { position: relative; height: .08rem; border-radius: .04rem; background: #ec5953; }
.fill::after { content: ""; position: absolute; right: -.12rem; top: -.08rem; width: .24rem; height: .24rem; border-radius: 50%; background: #ec5953; }
.range { display: flex; justify-content: space-between; margin-top: .22rem; }
h3 { margin-top: .79rem; font-size: .432rem; line-height: .6rem; font-weight: 700; letter-spacing: -.0075rem; -webkit-text-stroke: 0; }
h3 + .label { margin-top: .43rem; }
.select { height: 1rem; margin-top: .177rem; padding: 0 .37rem .04rem .275rem; border-radius: .08rem; background: #0f1116; display: flex; align-items: center; justify-content: space-between; font-size: .288rem; white-space: nowrap; }
.select svg { width: .14rem; height: .08rem; fill: #fafafa; margin-top: .05rem; }

.block, .result { font-family: "Noto Sans Mono CJK JP", "DejaVu Sans Mono", monospace; font-size: .22rem; line-height: .39rem; color: #4fa64b; -webkit-text-stroke: .2px; }
.block { display: flex; flex-direction: column; align-items: flex-start; gap: .116rem; margin-top: .38rem; }
.block span, .result { transform: scaleX(1.309); transform-origin: 0 0; }
.block span { height: .396rem; background: #1a1c24; white-space: nowrap; }
.block span:first-child { padding-left: .065rem; border-radius: .06rem 0 0 .06rem / .08rem 0 0 .08rem; }
.block span:last-child { padding-right: .065rem; border-radius: 0 .06rem .06rem 0 / 0 .08rem .08rem 0; }

.main { position: relative; flex: 1; padding-left: 15.2rem; }
.hamburger { position: absolute; top: .44rem; right: .58rem; width: .28rem; height: .24rem; stroke: #fafafa; stroke-width: 4; }
.column { width: 14.08rem; height: 100%; padding: 2.39rem 0 .18rem; display: flex; flex-direction: column; align-items: flex-start; }
h1 { font-size: .808rem; line-height: 1rem; font-weight: 700; letter-spacing: -.015rem; margin-left: -.01rem; -webkit-text-stroke: 1.4px; }
h2 { font-size: .64rem; line-height: .8rem; font-weight: 700; letter-spacing: -.0098rem; white-space: nowrap; -webkit-text-stroke: 0; }
.store { margin-top: .87rem; }
.store + .label { margin-top: .497rem; }
.field { width: 100%; height: 1rem; margin-top: .185rem; padding: .115rem .32rem 0; border-radius: .08rem; background: #262730; font-size: .288rem; line-height: .74rem; }
.field + .label { margin-top: .345rem; }
.number { width: 100%; display: flex; margin-top: .185rem; }
.number .field { margin: 0; width: 12.28rem; border-radius: .08rem 0 0 .08rem; }
.steps { flex: 1; height: .98rem; background: #262730; border-radius: 0 .08rem .08rem 0; display: flex; justify-content: space-between; align-items: center; padding: 0 .36rem 0 .375rem; }
.steps svg { width: .16rem; height: .16rem; stroke: #fafafa; stroke-width: 4; }
.button { height: .695rem; margin-top: .32rem; padding: 0 0 .01rem; border: 2px solid #464850; border-radius: .08rem; background: #131720; color: #fafafa; font: .288rem/.6rem "Noto Sans CJK JP", "Noto Sans CJK SC", sans-serif; letter-spacing: -.001rem; text-align: center; white-space: nowrap; -webkit-text-stroke: .45px; }
.button.add { width: 1.86rem; }
.ledger { margin-top: .712rem; }
.table { width: 8.68rem; margin-top: .473rem; border: 2px solid #2a2b32; border-bottom: 0; font-size: .288rem; }
.row { display: grid; grid-template-columns: .625rem 1fr; height: .564rem; border-bottom: 2px solid #2a2b32; line-height: .54rem; white-space: nowrap; }
.row span { padding-left: .115rem; color: #97989c; }
.row span + span { border-left: 2px solid #2a2b32; padding-left: .1rem; color: #fafafa; letter-spacing: -.0005rem; }
.row.head span + span { color: #97989c; line-height: .56rem; }
.button.focus { width: 2.44rem; margin-top: .325rem; border-color: #ec5953; color: #ec5953; box-shadow: 0 0 0 .065rem rgba(236, 89, 83, .5); -webkit-text-stroke: 0; }
.result { margin-top: .405rem; height: .4rem; padding: 0 .068rem; border-radius: .06rem / .08rem; background: #1a1c24; line-height: .4rem; }
footer { margin-top: auto; font-size: .252rem; line-height: .4rem; color: #606166; }
footer b { font-weight: 400; color: #97989b; }

.tooltip { position: absolute; left: 1.82rem; top: 1.43rem; width: 2.01rem; height: .39rem; padding-left: .12rem; background: #2d2b30; border: 1px solid #5b5a5e; box-shadow: 0 0 0 1px #111, 0 .06rem .16rem rgba(0, 0, 0, .4); color: #e4e3e4; font-size: .224rem; line-height: .37rem; white-space: nowrap; }

/* calendar notification */
.notification { position: absolute; left: 44.01rem; top: .82rem; width: 6.87rem; height: 1.28rem; padding: .24rem .25rem 0 .24rem; display: flex; border-radius: .3rem; border: 2px solid #515055; background: linear-gradient(160deg, #29282e 30%, #2e2b30 60%, #37302f); box-shadow: 0 .04rem .2rem rgba(0, 0, 0, .35); color: #e8e6e8; font-size: .252rem; line-height: .32rem; }
.note-icon { width: .74rem; height: .74rem; margin-right: .2rem; }
.note-body { flex: 1; padding-top: .055rem; }
.note-head { display: flex; justify-content: space-between; white-space: nowrap; height: .32rem; }
.note-head strong { font-size: .26rem; font-weight: 600; }
.note-head time { font-size: .216rem; color: #99979b; line-height: .34rem; }
.cal-month { font: 700 22px Inter, sans-serif; fill: #fff; text-anchor: middle; }
.cal-day { font: 300 67px Inter, sans-serif; letter-spacing: -3px; fill: #262626; text-anchor: middle; }

/* dock */
.dock { position: absolute; left: 15.29rem; top: 27.06rem; width: 20.63rem; height: 1.64rem; padding: .21rem 0 0 .2rem; display: flex; gap: .34rem; border-radius: .46rem; border: 2px solid rgba(255, 255, 255, .16); background: linear-gradient(180deg, rgba(15, 8, 25, .28), transparent 60%), linear-gradient(90deg, #20163a 0, #22164a 60%, #25174e 68%, #4d1a72 77%, #521b7c 90%, #4b1a72 100%); }
.dock-item { position: relative; width: 1.08rem; height: 1.08rem; }
.dock-item svg { width: 1.08rem; height: 1.08rem; filter: drop-shadow(0 .01rem .02rem rgba(0, 0, 0, .4)); }
.dock-item.running::after { content: ""; position: absolute; left: .49rem; top: 1.29rem; width: .08rem; height: .08rem; border-radius: 50%; background: #a98fd0; }
.dock-item:nth-child(n+12).running::after { background: #d097f8; }
.dock-sep { width: 2px; height: 1.2rem; margin: -.01rem .01rem 0 .15rem; background: #8f5db4; }
.trash { width: .96rem; height: 1.26rem; margin: -.12rem 0 0 .165rem; }
```
